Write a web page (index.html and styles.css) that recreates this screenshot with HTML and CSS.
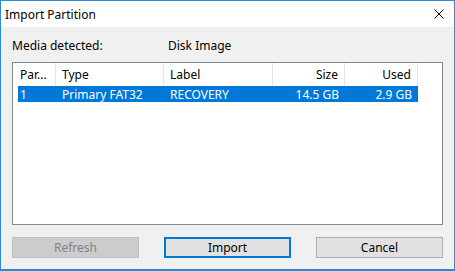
FILE: index.html
```html
<!DOCTYPE html>
<html lang="en">
<head>
    <meta charset="UTF-8">
    <title>Import Partition</title>
    <link rel="stylesheet" href="styles.css">
</head>
<body>
    <div class="window">
        <div class="titlebar">
            <span class="title">Import Partition</span>
            <svg class="close" width="10" height="10" viewBox="0 0 10 10">
                <path d="M0.5 0.5 L9.5 9.5 M9.5 0.5 L0.5 9.5" stroke="#000" stroke-width="1" fill="none"/>
            </svg>
        </div>
        <div class="content">
            <div class="media-row">
                <span class="media-label">Media detected:</span>
                <span class="media-value">Disk Image</span>
            </div>
            <div class="listview">
                <div class="lv-header">
                    <div class="col">Par...</div>
                    <div class="col">Type</div>
                    <div class="col">Label</div>
                    <div class="col right">Size</div>
                    <div class="col right">Used</div>
                </div>
                <div class="lv-row selected">
                    <div class="cell first">1</div>
                    <div class="cell">Primary FAT32</div>
                    <div class="cell">RECOVERY</div>
                    <div class="cell right">14.5 GB</div>
                    <div class="cell right">2.9 GB</div>
                </div>
            </div>
            <div class="buttons">
                <button class="btn disabled">Refresh</button>
                <button class="btn default">Import</button>
                <button class="btn">Cancel</button>
            </div>
        </div>
    </div>
</body>
</html>
```
FILE: styles.css
```css
body {
    margin: 0;
    font-family: 'Noto Sans', 'Open Sans', sans-serif;
    font-size: 12px;
    color: #000;
}

.window {
    width: 455px;
    height: 271px;
    box-sizing: border-box;
    border: 1px solid #2d8ad6;
    border-bottom-width: 2px;
    background: #f0f0f0;
    display: flex;
    flex-direction: column;
}

.titlebar {
    height: 26px;
    background: #fff;
    display: flex;
    align-items: center;
    justify-content: space-between;
    padding: 0 10px 0 4px;
}

.title {
    font-size: 12px;
}

.close {
    display: block;
}

.content {
    flex: 1;
    padding: 0 11px;
    display: flex;
    flex-direction: column;
}

.media-row {
    display: flex;
    height: 17px;
    align-items: center;
    margin-top: 10px;
}

.media-label {
    width: 156px;
}

.listview {
    margin-top: 8px;
    height: 163px;
    box-sizing: border-box;
    border: 1px solid #828790;
    background: #fff;
}

.lv-header {
    display: grid;
    grid-template-columns: 43px 108px 109px 72px 73px;
    height: 23px;
}

.col {
    border-right: 1px solid #e5e5e5;
    display: flex;
    align-items: center;
    padding: 0 6px;
    white-space: nowrap;
}

.col:first-child {
    padding-left: 7px;
}

.right {
    justify-content: flex-end;
}

.lv-row {
    display: grid;
    grid-template-columns: 38px 108px 109px 72px 73px;
    margin-left: 5px;
    width: 400px;
    height: 16px;
}

.lv-row.selected {
    background: #0078d7;
    color: #fff;
}

.cell {
    display: flex;
    align-items: center;
    padding: 0 6px;
    white-space: nowrap;
}

.cell.first {
    padding-left: 2px;
}

.buttons {
    display: flex;
    justify-content: space-between;
    margin-top: 12px;
}

.btn {
    width: 127px;
    height: 21px;
    box-sizing: border-box;
    font-family: inherit;
    font-size: 12px;
    color: #000;
    background: #e1e1e1;
    border: 1px solid #adadad;
    padding: 0;
}

.btn.disabled {
    background: #cccccc;
    border-color: #bfbfbf;
    color: #838383;
}

.btn.default {
    border: 2px solid #0078d7;
}
```
